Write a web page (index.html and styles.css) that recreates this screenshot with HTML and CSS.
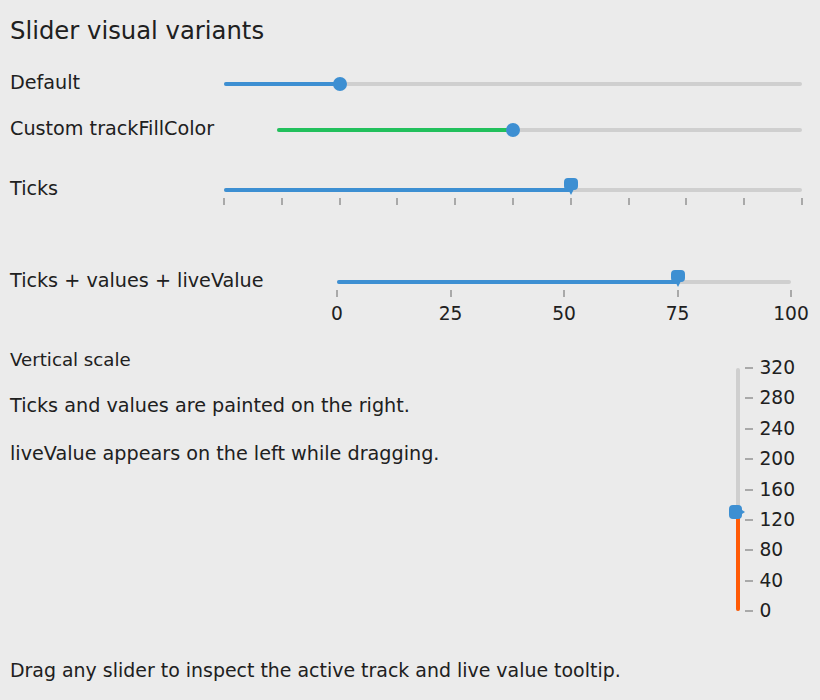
FILE: index.html
```html
<!DOCTYPE html>
<html lang="en">
<head>
<meta charset="utf-8">
<title>Slider visual variants</title>
<link rel="stylesheet" href="styles.css">
</head>
<body>
<main class="page">
  <h1 class="title">Slider visual variants</h1>

  <div class="row row-default">
    <span class="label">Default</span>
    <div class="slider">
      <div class="track-area">
        <div class="track">
          <div class="fill" style="width:20%"></div>
          <div class="thumb thumb-round" style="left:20%"></div>
        </div>
      </div>
    </div>
  </div>

  <div class="row row-fill">
    <span class="label">Custom trackFillColor</span>
    <div class="slider">
      <div class="track-area">
        <div class="track">
          <div class="fill fill-green" style="width:45%"></div>
          <div class="thumb thumb-round" style="left:45%"></div>
        </div>
      </div>
    </div>
  </div>

  <div class="row row-ticks">
    <span class="label">Ticks</span>
    <div class="slider">
      <div class="track-area">
        <div class="track">
          <div class="fill" style="width:60%"></div>
          <svg class="thumb thumb-pin" style="left:60%" width="14" height="18" viewBox="0 0 14 18">
            <path d="M4 0H10A4 4 0 0 1 14 4V8A4 4 0 0 1 10 12H9.5L7 17L4.5 12H4A4 4 0 0 1 0 8V4A4 4 0 0 1 4 0Z"/>
          </svg>
        </div>
      </div>
      <div class="ticks">
        <i></i><i></i><i></i><i></i><i></i><i></i><i></i><i></i><i></i><i></i><i></i>
      </div>
    </div>
  </div>

  <div class="row row-values">
    <span class="label">Ticks + values + liveValue</span>
    <div class="slider">
      <div class="track-area">
        <div class="track">
          <div class="fill" style="width:75%"></div>
          <svg class="thumb thumb-pin" style="left:75%" width="14" height="18" viewBox="0 0 14 18">
            <path d="M4 0H10A4 4 0 0 1 14 4V8A4 4 0 0 1 10 12H9.5L7 17L4.5 12H4A4 4 0 0 1 0 8V4A4 4 0 0 1 4 0Z"/>
          </svg>
        </div>
      </div>
      <div class="ticks">
        <i></i><i></i><i></i><i></i><i></i>
      </div>
      <div class="values">
        <span>0</span><span>25</span><span>50</span><span>75</span><span>100</span>
      </div>
    </div>
  </div>

  <section class="vertical">
    <div class="vertical-text">
      <p class="vertical-title">Vertical scale</p>
      <p class="note">Ticks and values are painted on the right.</p>
      <p class="note note-last">liveValue appears on the left while dragging.</p>
    </div>
    <div class="vslider">
      <div class="vtrack-wrap">
        <div class="vtrack">
          <div class="vfill" style="height:40.625%"></div>
          <svg class="vthumb" style="bottom:40.625%" width="17" height="14" viewBox="0 0 17 14">
            <path d="M4 0H9A4 4 0 0 1 13 4V5L16 7L13 9V10A4 4 0 0 1 9 14H4A4 4 0 0 1 0 10V4A4 4 0 0 1 4 0Z"/>
          </svg>
        </div>
      </div>
      <div class="vscale">
        <span>320</span><span>280</span><span>240</span><span>200</span><span>160</span><span>120</span><span>80</span><span>40</span><span>0</span>
      </div>
    </div>
  </section>

  <p class="footer">Drag any slider to inspect the active track and live value tooltip.</p>
</main>
</body>
</html>
```

FILE: styles.css
```css
html, body {
  margin: 0;
  padding: 0;
  background: #ebebeb;
}

body {
  font-family: "DejaVu Sans", "Liberation Sans", sans-serif;
  color: #202020;
  font-size: 19.2px;
  line-height: 22px;
}

.page {
  width: 820px;
  height: 700px;
  box-sizing: border-box;
  padding: 0 10px;
  overflow: hidden;
}

.title {
  margin: 0;
  padding-top: 17px;
  font-size: 24.3px;
  line-height: 28px;
  font-weight: normal;
}

/* ---- horizontal rows ---- */
.row {
  display: flex;
  align-items: flex-start;
}

.label {
  flex: none;
  margin: -4px 0 -6px;
  line-height: 22px;
  white-space: nowrap;
}

.slider {
  flex: 1;
  margin-right: 8px;
}

.row-default { margin-top: 31px; }
.row-default .label { width: 214px; }

.row-fill { margin-top: 30px; }
.row-fill .label { width: 267px; }

.row-ticks { margin-top: 44px; }
.row-ticks .label { width: 214px; }

.row-values { margin-top: 69px; }
.row-values .label { width: 327px; }
.row-values .slider { margin-right: 19px; }

.track-area {
  height: 16px;
  display: flex;
  align-items: center;
}

.track {
  position: relative;
  flex: 1;
  height: 4px;
  border-radius: 2px;
  background: #cfcfcf;
}

.fill {
  height: 100%;
  border-radius: 2px;
  background: #3d8fd2;
}

.fill-green {
  background: #22c05c;
}

.thumb {
  position: absolute;
  transform: translateX(-50%);
}

.thumb-round {
  top: -5px;
  width: 14px;
  height: 14px;
  border-radius: 50%;
  background: #3d8fd2;
}

.thumb-pin {
  top: -10px;
  fill: #3d8fd2;
  display: block;
}

.ticks {
  display: flex;
  justify-content: space-between;
  margin: 0 -1px;
  height: 7px;
}

.ticks i {
  display: block;
  width: 2px;
  height: 7px;
  background: #a9a9a9;
}

.values {
  display: flex;
  justify-content: space-between;
  margin-top: 7px;
  font-size: 18.67px;
  line-height: 20px;
}

.values span {
  width: 0;
  display: flex;
  justify-content: center;
  white-space: nowrap;
}

/* ---- vertical scale ---- */
.vertical {
  display: flex;
  margin-top: 25px;
}

.vertical-text {
  flex: 1;
}

.vertical-text p {
  margin: 0;
}

.vertical-title {
  font-size: 18.2px;
  line-height: 22px;
}

.vertical-text .note {
  margin-top: 24px;
}

.vertical-text .note-last {
  margin-top: 26px;
}

.vslider {
  display: flex;
  margin-top: 9px;
  margin-right: 15px;
  height: 263px;
}

.vtrack-wrap {
  width: 4px;
  padding: 10px 0;
  box-sizing: border-box;
}

.vtrack {
  position: relative;
  height: 100%;
  width: 4px;
  border-radius: 2px;
  background: #cfcfcf;
  display: flex;
  flex-direction: column;
  justify-content: flex-end;
}

.vfill {
  width: 4px;
  border-radius: 2px;
  background: #ff5a05;
}

.vthumb {
  position: absolute;
  left: -7px;
  transform: translateY(50%);
  fill: #3d8fd2;
  display: block;
}

.vscale {
  display: flex;
  flex-direction: column;
  justify-content: space-between;
  margin-left: 5px;
  font-size: 18.67px;
  line-height: 20px;
}

.vscale span {
  display: flex;
  align-items: center;
}

.vscale span::before {
  content: "";
  display: block;
  width: 8px;
  height: 2px;
  margin-right: 6px;
  background: #a9a9a9;
}

.footer {
  margin: 38px 0 0;
  font-size: 18.95px;
  line-height: 22px;
}
```
